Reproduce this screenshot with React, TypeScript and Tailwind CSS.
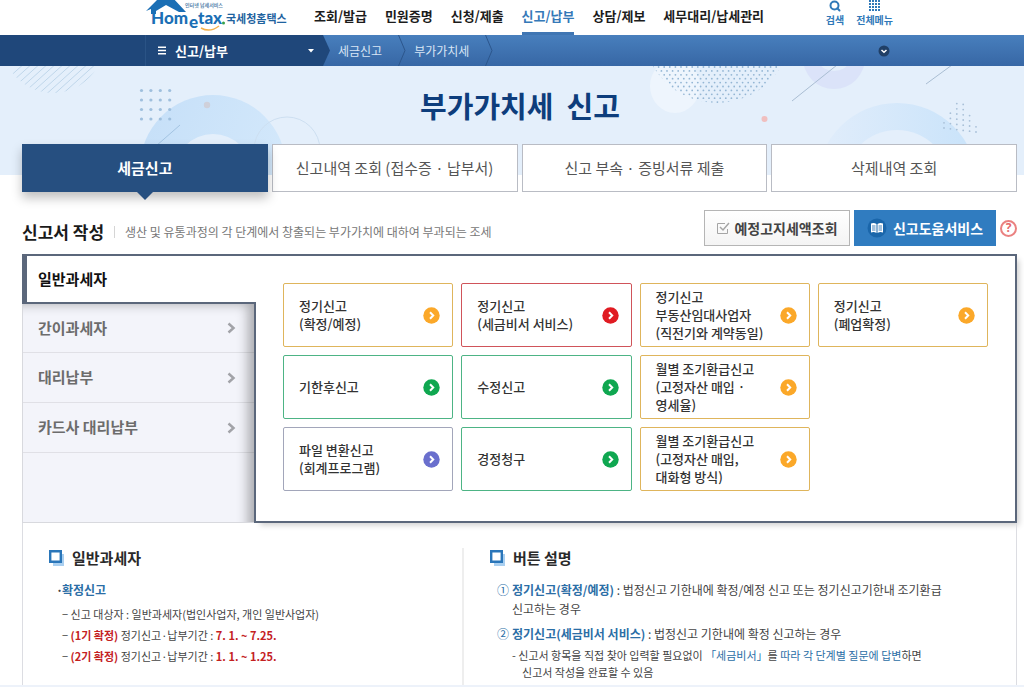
import React from 'react';
import { Search } from 'lucide-react';

type Tone = 'amber' | 'red' | 'green' | 'violet';

interface FilingCard {
  lines: string[];
  tone: Tone;
}

const NAV_ITEMS = ['조회/발급', '민원증명', '신청/제출', '신고/납부', '상담/제보', '세무대리/납세관리'];

const TABS = ['세금신고', '신고내역 조회 (접수증 · 납부서)', '신고 부속 · 증빙서류 제출', '삭제내역 조회'];

const SIDE_ITEMS = ['간이과세자', '대리납부', '카드사 대리납부'];

const CARDS: FilingCard[] = [
  { lines: ['정기신고', '(확정/예정)'], tone: 'amber' },
  { lines: ['정기신고', '(세금비서 서비스)'], tone: 'red' },
  { lines: ['정기신고', '부동산임대사업자', '(직전기와 계약동일)'], tone: 'amber' },
  { lines: ['정기신고', '(폐업확정)'], tone: 'amber' },
  { lines: ['기한후신고'], tone: 'green' },
  { lines: ['수정신고'], tone: 'green' },
  { lines: ['월별 조기환급신고', '(고정자산 매입 ·', '영세율)'], tone: 'amber' },
  { lines: ['파일 변환신고', '(회계프로그램)'], tone: 'violet' },
  { lines: ['경정청구'], tone: 'green' },
  { lines: ['월별 조기환급신고', '(고정자산 매입,', '대화형 방식)'], tone: 'amber' },
];

const BORDER: Record<Tone, string> = {
  amber: 'border-[#dfb55c]',
  red: 'border-[#d0545a]',
  green: 'border-[#4db485]',
  violet: 'border-[#a2a6ba]',
};

const DOT: Record<Tone, string> = {
  amber: 'fill-[#fba829]',
  red: 'fill-[#e01b22]',
  green: 'fill-[#0fa750]',
  violet: 'fill-[#6a6fcd]',
};

const Logo: React.FC = () => (
  <svg width="141" height="35" viewBox="0 0 141 35" role="img" aria-label="Hometax 국세청홈택스">
    <path d="M0 11 L14 -3 H26 L40 12 H33 L20 5 L10 11 V14 H5 V9 Z" fill="#1b6fb5" />
    <text x="39" y="7" fontSize="5" fill="#5b87ad" className="font-bold">인터넷 납세서비스</text>
    <g fill="#1b6fb5" fontFamily="Lato, 'Open Sans', sans-serif" fontWeight="900" fontSize="17">
      <text x="5" y="24">Hom</text>
      <text x="43" y="28">e</text>
      <text x="52" y="24">tax</text>
    </g>
    <circle cx="77.500" cy="23" r="1.500" fill="#35a04a" />
    <path d="M55 28 Q64 33 73 26" fill="none" stroke="#f3b04a" strokeWidth="1.500" />
    <text x="80" y="23" fontSize="11" fill="#1f639f" className="font-bold">국세청홈택스</text>
  </svg>
);

const CrumbDivider: React.FC = () => (
  <svg width="8" height="31" viewBox="0 0 8 31" fill="none" stroke="#2c568c" aria-hidden="true">
    <path d="M0.5 0 L7 15.5 L0.5 31" />
  </svg>
);

const grid = (cols: number, rows: number) =>
  Array.from({ length: cols * rows }, (_, i) => ({ c: i % cols, r: Math.floor(i / cols) }));

const HeroArt: React.FC = () => (
  <svg className="absolute inset-0 h-full w-full" viewBox="0 0 1024 109" preserveAspectRatio="xMidYMin slice" aria-hidden="true">
    <defs>
      <linearGradient id="ring" x1="0" y1="0" x2="1" y2="0.4">
        <stop offset="0" stopColor="#c5dff8" />
        <stop offset="1" stopColor="#d3e8fb" />
      </linearGradient>
      <linearGradient id="ringRight" x1="0" y1="0" x2="1" y2="0">
        <stop offset="0" stopColor="#e1edfb" />
        <stop offset="1" stopColor="#c9e3fa" />
      </linearGradient>
      <clipPath id="leftDisc"><circle cx="53" cy="-24" r="51" /></clipPath>
      <clipPath id="dotDisc"><circle cx="717" cy="-37" r="74" /></clipPath>
    </defs>
    <g clipPath="url(#leftDisc)" stroke="#bfd6ea">
      {Array.from({ length: 18 }, (_, i) => (
        <path key={i} d={`M${i * 8 - 14} 32 L${i * 8 + 26} -4`} />
      ))}
    </g>
    <circle cx="213" cy="102" r="73" fill="url(#ring)" />
    <circle cx="213" cy="107" r="39" fill="#e4effb" />
    <g fill="#9fbfdd">
      {grid(4, 4).map(({ c, r }) => (
        <circle key={`${c}-${r}`} cx={141.5 + c * 9.4} cy={24.5 + r * 9.5} r="1.6" />
      ))}
    </g>
    <circle cx="207" cy="39" r="3.2" fill="#cfd0da" />
    <path d="M156 80 L180 59" stroke="#a3c4e2" />
    <circle cx="287" cy="84" r="33" fill="none" stroke="#cddff1" />
    <ellipse cx="675" cy="20" rx="25" ry="27" fill="#eef5fd" />
    <g clipPath="url(#dotDisc)" fill="#94b6d4">
      {grid(26, 10).map(({ c, r }) => (
        <circle key={`${c}-${r}`} cx={653 + c * 5.6 + (r % 2) * 2.8} cy={1 + r * 3.9} r="0.9" />
      ))}
    </g>
    <circle cx="764.500" cy="53" r="3" fill="#f0bfbf" />
    <circle cx="834" cy="-8" r="31" fill="#dbe3f9" />
    <ellipse cx="834" cy="-4" rx="14" ry="9" fill="#e4effb" />
    <path d="M792 35 L837 -1 M926 18 L952 -1" stroke="#a9bdd2" />
    <circle cx="897" cy="117" r="80" fill="url(#ringRight)" />
    <circle cx="897" cy="117" r="53" fill="#e4effb" />
    <g fill="#a9c0d8">
      {grid(6, 6).filter(({ c, r }) => Math.abs(c - 2.5) * 2 <= r + 1).map(({ c, r }) => (
        <circle key={`${c}-${r}`} cx={944 + c * 6.4} cy={36 + r * 5.2 + c * 0.8} r="0.9" />
      ))}
    </g>
  </svg>
);

const CardArrow: React.FC<{ tone: Tone }> = ({ tone }) => (
  <svg className="shrink-0" width="17" height="17" viewBox="0 0 17 17" aria-hidden="true">
    <circle cx="8.5" cy="8.5" r="8.2" className={DOT[tone]} />
    <path d="M7 5.300 L10.200 8.500 L7 11.700" fill="none" stroke="#fff" strokeWidth="2" />
  </svg>
);

const Heading: React.FC<{ children: React.ReactNode }> = ({ children }) => (
  <h3 className="flex items-center gap-2 text-[15px] leading-5 font-bold text-[#2a2a2a]">
    <svg width="15" height="16" viewBox="0 0 15 16" aria-hidden="true">
      <path d="M4 4h11v12H4z" fill="#a9cff0" />
      <path d="M1.200 1.200h10.600v10.600H1.200z" fill="#fff" stroke="#2a76b9" strokeWidth="2.400" />
    </svg>
    {children}
  </h3>
);

const Header: React.FC = () => (
  <header className="h-[35px] shrink-0 bg-white pl-[146px]">
    <div className="flex h-full max-w-[747px] justify-between">
      <div className="flex">
        <a href="#" className="mr-[27px]"><Logo /></a>
        <nav className="flex gap-[18px]">
          {NAV_ITEMS.map((item) => (
            <a
              key={item}
              href="#"
              className={`flex items-center border-b-3 text-[13px] leading-4 font-bold whitespace-nowrap ${
                item === '신고/납부' ? 'border-[#4076b3] text-[#3579b8]' : 'border-transparent text-[#1c1c1c]'
              }`}
            >
              {item}
            </a>
          ))}
        </nav>
      </div>
      <div className="flex gap-3 text-[10px] leading-4 font-bold text-[#2f78b8]">
        <button type="button" className="flex flex-col items-center">
          <Search size={12} strokeWidth={4} />
          검색
        </button>
        <button type="button" className="flex flex-col items-center whitespace-nowrap">
          <svg width="12" height="12" viewBox="0 0 12 12" fill="#2f78b8" aria-hidden="true">
            {grid(4, 4).map(({ c, r }) => (
              <rect key={`${c}-${r}`} x={c * 3} y={r * 3} width="2" height="2" />
            ))}
          </svg>
          전체메뉴
        </button>
      </div>
    </div>
  </header>
);

const Breadcrumb: React.FC = () => (
  <div className="flex h-[31px] shrink-0 bg-linear-to-b from-[#487fbd] to-[#3767a5]">
    <div className="w-[146px] shrink-0 border-r border-[#2a5385] bg-[#1f477a]" />
    <div className="flex w-full max-w-[744px] items-center text-xs text-[#d9e6f5]">
      <button type="button" className="flex h-full w-[177px] items-center bg-[#1f477a] pr-2 pl-3 text-[13px] font-bold text-white">
        <svg width="8" height="9" viewBox="0 0 8 9" fill="#fff" aria-hidden="true">
          <path d="M0 0.500h8v1.500H0zM0 3.700h8v1.500H0zM0 7h8v1.500H0z" />
        </svg>
        <span className="ml-[9px]">신고/납부</span>
        <svg className="ml-auto" width="8" height="4" viewBox="0 0 8 4" fill="#fff" aria-hidden="true">
          <path d="M1 0h6L4 3.500z" />
        </svg>
      </button>
      <svg width="8" height="31" viewBox="0 0 8 31" fill="#1f477a" aria-hidden="true">
        <path d="M0 0L7 15.500L0 31z" />
      </svg>
      <a href="#" className="mr-4 ml-[7px] whitespace-nowrap">세금신고</a>
      <CrumbDivider />
      <a href="#" className="mr-4 ml-2 whitespace-nowrap">부가가치세</a>
      <CrumbDivider />
      <button type="button" className="ml-auto" aria-label="펼치기">
        <svg width="12" height="12" viewBox="0 0 12 12" aria-hidden="true">
          <circle cx="6" cy="6" r="5.5" fill="#203f66" />
          <path d="M3.500 5L6 7.300L8.500 5" fill="none" stroke="#fff" strokeWidth="1.500" />
        </svg>
      </button>
    </div>
  </div>
);

const Hero: React.FC = () => (
  <div className="relative flex shrink-0 flex-col bg-[#e4effb]">
    <HeroArt />
    <h1 className="relative flex h-[78px] items-center justify-center pt-0.5 pl-4 text-[29px] font-bold text-[#0d3d7c]">
      부가가치세&nbsp; 신고
    </h1>
    <div role="tablist" className="relative -mb-[17px] grid grid-cols-4 gap-1 pr-[7px] pl-[22px] text-[15px]">
      {TABS.map((tab, i) =>
        i === 0 ? (
          <button
            key={tab}
            type="button"
            role="tab"
            aria-selected="true"
            className="relative h-12 bg-[#264f80] font-bold text-white shadow-[0_6px_10px_rgba(0,0,0,0.25)]"
          >
            {tab}
            <svg className="absolute top-full left-1/2 -translate-x-1/2" width="16" height="8" viewBox="0 0 16 8" aria-hidden="true">
              <path d="M0 0h16L8 8z" fill="#264f80" />
            </svg>
          </button>
        ) : (
          <button
            key={tab}
            type="button"
            role="tab"
            aria-selected="false"
            className="h-12 border border-[#b9bcc4] bg-white text-[#555]"
          >
            {tab}
          </button>
        )
      )}
    </div>
  </div>
);

const SectionTitle: React.FC = () => (
  <div className="flex shrink-0 items-center pt-[35px]">
    <div className="flex items-center pt-2">
      <h2 className="text-[17px] font-bold whitespace-nowrap text-[#1a1a1a]">신고서 작성</h2>
      <p className="ml-2.5 flex items-center gap-2.5 text-xs whitespace-nowrap text-[#777]">
        <span className="h-3 w-px bg-[#d5d5d5]" />
        생산 및 유통과정의 각 단계에서 창출되는 부가가치에 대하여 부과되는 조세
      </p>
    </div>
    <div className="ml-auto flex items-center gap-1 text-sm font-bold whitespace-nowrap">
      <button type="button" className="flex h-9 w-[146px] items-center justify-center gap-1 border border-[#b5b5b5] bg-linear-to-b from-white to-[#f4f4f4] text-[#444]">
        <svg width="14" height="14" viewBox="0 0 14 14" fill="none" stroke="#a5a5a5" aria-hidden="true">
          <path d="M9 2.500H1.500v10h10V8" />
          <path d="M4 6l3 3 6-7" strokeWidth="1.500" />
        </svg>
        예정고지세액조회
      </button>
      <button type="button" className="flex h-9 w-[142px] items-center justify-center gap-1.5 bg-[#307cc0] text-white">
        <svg width="20" height="20" viewBox="0 0 20 20" aria-hidden="true">
          <circle cx="10" cy="10" r="9.5" fill="#1a66aa" />
          <path d="M4 5.500q3-1 5.500 0.500v9Q7 13.500 4 14.500zM16 5.500q-3-1-5.500 0.500v9Q13 13.500 16 14.500z" fill="#fff" />
          <path d="M5 8h3.500M5 10h3.500M5 12h3.500M11.500 8H15M11.500 10H15M11.500 12H15" stroke="#1a66aa" strokeWidth="0.800" />
        </svg>
        신고도움서비스
      </button>
      <button type="button" aria-label="도움말" className="flex size-[17px] items-center justify-center rounded-full border-2 border-[#ea8180] font-['Open_Sans',sans-serif] text-xs leading-3 font-bold text-[#e4696a]">
        ?
      </button>
    </div>
  </div>
);

const FilingPanel: React.FC = () => (
  <div className="mt-2 grid shrink-0 grid-cols-[232px_1fr]">
    <div className="flex flex-col">
      <button type="button" className="relative z-10 -mr-0.5 h-[50px] border-y-2 border-l-5 border-[#5b677b] bg-white pl-[11px] text-left text-[15px] font-bold text-[#111]">
        일반과세자
      </button>
      <div className="flex-1 border-b border-l border-[#d8d9de] bg-[#f3f4fa] shadow-[inset_-14px_8px_12px_-8px_rgba(0,0,0,0.3)]">
        {SIDE_ITEMS.map((item, i) => (
          <button
            key={item}
            type="button"
            className={`flex w-full items-center justify-between border-b border-black/8 pr-[18px] pl-[15px] text-[15px] font-bold text-[#6c6c6c] ${
              i === 0 ? 'h-[49px]' : 'h-[50px]'
            }`}
          >
            {item}
            <svg width="9" height="12" viewBox="0 0 9 12" fill="none" stroke="#a2a3a8" strokeWidth="2.500" aria-hidden="true">
              <path d="M1.500 1.500L6.500 6L1.500 10.500" />
            </svg>
          </button>
        ))}
      </div>
    </div>
    <div className="border-2 border-[#5b677b] bg-white px-[27px] pt-[27px] pb-[30px] shadow-[4px_4px_6px_-2px_rgba(0,0,0,0.2)]">
      <div className="grid grid-cols-4 gap-2">
        {CARDS.map(({ lines, tone }, i) => (
          <button
            key={i}
            type="button"
            className={`flex h-16 items-center justify-between rounded-xs border bg-white pr-3 pl-[15px] text-left text-[13px] leading-[18px] font-medium whitespace-nowrap text-[#333] ${BORDER[tone]} ${
              i === 7 ? 'col-start-1' : ''
            }`}
          >
            <span>
              {lines.map((line) => (
                <span key={line} className="block">{line}</span>
              ))}
            </span>
            <CardArrow tone={tone} />
          </button>
        ))}
      </div>
    </div>
  </div>
);

const Details: React.FC = () => (
  <div className="grid min-h-0 flex-1 grid-cols-[441px_1fr] overflow-hidden border-x border-[#dcdde2] pt-[25px] text-[#444]">
    <section className="border-r-2 border-[#eeeeee] pl-[26px]">
      <Heading>일반과세자</Heading>
      <ul className="mt-3 pl-[7px] text-xs leading-5">
        <li>
          <div className="flex">
            <span className="w-1.5 font-bold">·</span>
            <a href="#" className="font-bold text-[#2b6ea6]">확정신고</a>
          </div>
          <ul className="mt-1 pl-1.5 text-[11px] leading-[21px]">
            <li>− 신고 대상자 : 일반과세자(법인사업자, 개인 일반사업자)</li>
            <li>
              − <b className="text-[#c4211f]">(1기 확정)</b> 정기신고·납부기간 : <b className="text-[#c4211f]">7. 1. ~ 7.25.</b>
            </li>
            <li>
              − <b className="text-[#c4211f]">(2기 확정)</b> 정기신고·납부기간 : <b className="text-[#c4211f]">1. 1. ~ 1.25.</b>
            </li>
          </ul>
        </li>
        <li className="mt-3.5 flex">
          <span className="w-1.5 font-bold">·</span>
          <a href="#" className="font-bold text-[#2b6ea6]">예정신고</a>
        </li>
      </ul>
    </section>
    <section className="pl-[26px]">
      <Heading>버튼 설명</Heading>
      <ol className="mt-3 pl-[7px] text-xs leading-[19px]">
        <li className="flex gap-[3px]">
          <span className="text-[#2b6ea6]">①</span>
          <p>
            <b className="text-[#2b6ea6]">정기신고(확정/예정)</b> : 법정신고 기한내에 확정/예정 신고 또는 정기신고기한내 조기환급
            <br />
            신고하는 경우
          </p>
        </li>
        <li className="mt-1.5 flex gap-[3px]">
          <span className="text-[#2b6ea6]">②</span>
          <div>
            <p>
              <b className="text-[#2b6ea6]">정기신고(세금비서 서비스)</b> : 법정신고 기한내에 확정 신고하는 경우
            </p>
            <p className="mt-1 pl-2.5 -indent-2.5 text-[11px] leading-[17px]">
              - 신고서 항목을 직접 찾아 입력할 필요없이 <span className="text-[#2b6ea6]">「세금비서」</span>를{' '}
              <span className="text-[#2b6ea6]">따라 각 단계별 질문에 답변</span>하면
              <br />
              신고서 작성을 완료할 수 있음
            </p>
          </div>
        </li>
      </ol>
    </section>
  </div>
);

export default function App() {
  return (
    <div className="flex h-screen flex-col overflow-hidden bg-white font-['Noto_Sans_CJK_KR',sans-serif]">
      <Header />
      <Breadcrumb />
      <Hero />
      <main className="flex min-h-0 flex-1 flex-col pr-[7px] pl-[22px]">
        <SectionTitle />
        <FilingPanel />
        <Details />
      </main>
      <div className="h-0.5 shrink-0 bg-[#edf2fa]" />
    </div>
  );
}
